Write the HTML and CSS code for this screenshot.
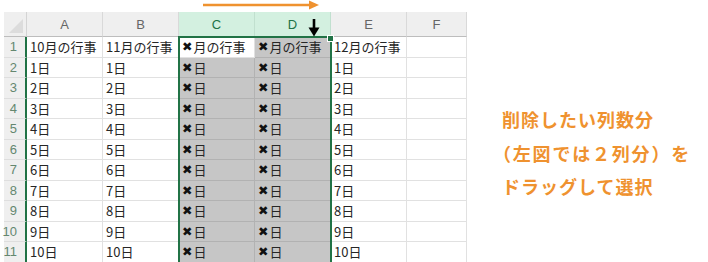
FILE: index.html
```html
<!DOCTYPE html>
<html>

<head>
    <meta charset="utf-8">
    <title>列の選択</title>
    <meta name="viewport" content="width=device-width, initial-scale=1">
    <link rel="stylesheet" href="styles.css">
</head>

<body>
    <main class="page">
        <section class="sheet">
            <div class="corner"><span class="corner-mark"></span></div>
            <div class="col-head">A</div>
            <div class="col-head">B</div>
            <div class="col-head active">C</div>
            <div class="col-head active">D</div>
            <div class="col-head">E</div>
            <div class="col-head">F</div>

            <div class="row-head">1</div>
            <div class="cell">10月の行事</div>
            <div class="cell">11月の行事</div>
            <div class="cell current"><b>✖</b>月の行事</div>
            <div class="cell sel"><b>✖</b>月の行事</div>
            <div class="cell">12月の行事</div>
            <div class="cell"></div>

            <div class="row-head">2</div>
            <div class="cell">1日</div>
            <div class="cell">1日</div>
            <div class="cell sel"><b>✖</b>日</div>
            <div class="cell sel"><b>✖</b>日</div>
            <div class="cell">1日</div>
            <div class="cell"></div>

            <div class="row-head">3</div>
            <div class="cell">2日</div>
            <div class="cell">2日</div>
            <div class="cell sel"><b>✖</b>日</div>
            <div class="cell sel"><b>✖</b>日</div>
            <div class="cell">2日</div>
            <div class="cell"></div>

            <div class="row-head">4</div>
            <div class="cell">3日</div>
            <div class="cell">3日</div>
            <div class="cell sel"><b>✖</b>日</div>
            <div class="cell sel"><b>✖</b>日</div>
            <div class="cell">3日</div>
            <div class="cell"></div>

            <div class="row-head">5</div>
            <div class="cell">4日</div>
            <div class="cell">4日</div>
            <div class="cell sel"><b>✖</b>日</div>
            <div class="cell sel"><b>✖</b>日</div>
            <div class="cell">4日</div>
            <div class="cell"></div>

            <div class="row-head">6</div>
            <div class="cell">5日</div>
            <div class="cell">5日</div>
            <div class="cell sel"><b>✖</b>日</div>
            <div class="cell sel"><b>✖</b>日</div>
            <div class="cell">5日</div>
            <div class="cell"></div>

            <div class="row-head">7</div>
            <div class="cell">6日</div>
            <div class="cell">6日</div>
            <div class="cell sel"><b>✖</b>日</div>
            <div class="cell sel"><b>✖</b>日</div>
            <div class="cell">6日</div>
            <div class="cell"></div>

            <div class="row-head">8</div>
            <div class="cell">7日</div>
            <div class="cell">7日</div>
            <div class="cell sel"><b>✖</b>日</div>
            <div class="cell sel"><b>✖</b>日</div>
            <div class="cell">7日</div>
            <div class="cell"></div>

            <div class="row-head">9</div>
            <div class="cell">8日</div>
            <div class="cell">8日</div>
            <div class="cell sel"><b>✖</b>日</div>
            <div class="cell sel"><b>✖</b>日</div>
            <div class="cell">8日</div>
            <div class="cell"></div>

            <div class="row-head">10</div>
            <div class="cell">9日</div>
            <div class="cell">9日</div>
            <div class="cell sel"><b>✖</b>日</div>
            <div class="cell sel"><b>✖</b>日</div>
            <div class="cell">9日</div>
            <div class="cell"></div>

            <div class="row-head">11</div>
            <div class="cell">10日</div>
            <div class="cell">10日</div>
            <div class="cell sel"><b>✖</b>日</div>
            <div class="cell sel"><b>✖</b>日</div>
            <div class="cell">10日</div>
            <div class="cell"></div>

            <!-- selection frame over C1:D11 -->
            <div class="selection"><span class="handle"></span></div>
        </section>

        <p class="note">
            <span class="line">削除したい列数分</span>
            <span class="line wide"><span class="paren">（</span>左図では２列分）を</span>
            <span class="line">ドラッグして選択</span>
        </p>

        <!-- drag arrows drawn over the sheet -->
        <svg class="drag-arrow" width="120" height="10" viewBox="0 0 120 10">
            <line x1="0" y1="5" x2="110" y2="5" stroke="#ef922f" stroke-width="2.4" />
            <path d="M106 0.5 L116 5 L106 9.5 Z" fill="#ef922f" />
        </svg>
        <svg class="down-arrow" width="12" height="18" viewBox="0 0 12 18">
            <line x1="6" y1="0" x2="6" y2="10" stroke="#000" stroke-width="2.6" />
            <path d="M0.5 8.5 L11.5 8.5 L6 17.5 Z" fill="#000" />
        </svg>
    </main>
</body>

</html>
```

FILE: styles.css
```css
body {
    margin: 0;
    background-color: #fff;
    font-family: "Noto Sans CJK JP", "Noto Sans", sans-serif;
}

.page {
    position: relative;
    display: flex;
    align-items: flex-start;
    width: 708px;
    height: 262px;
    overflow: hidden;
}

.sheet {
    position: relative;
    display: grid;
    grid-template-columns: 23px 76px 76px 76px 76px 76px 60px;
    grid-template-rows: 25px repeat(11, 20.5px);
    margin: 12px 0 0 4px;
    font-size: 13px;
    color: #262626;
}

.corner {
    position: relative;
    background-color: #efefef;
    border-bottom: 1px solid #bdbdbd;
    border-right: 1px solid #d4d4d4;
    box-sizing: border-box;
}

.corner-mark {
    position: absolute;
    right: 3px;
    bottom: 3px;
    width: 0;
    height: 0;
    border-left: 14px solid transparent;
    border-bottom: 14px solid #dcdcdc;
}

.col-head {
    display: flex;
    align-items: center;
    justify-content: center;
    background-color: #efefef;
    border-right: 1px solid #d9d9d9;
    border-bottom: 1px solid #bdbdbd;
    box-sizing: border-box;
    font-family: "Liberation Sans", sans-serif;
    font-size: 13px;
    color: #666;
}

.col-head.active {
    background-color: #d3f0e0;
    color: #217346;
    border-right-color: #c1e0cf;
}

.row-head {
    display: flex;
    align-items: center;
    justify-content: flex-end;
    padding-right: 8px;
    background-color: #efefef;
    border-right: 2px solid #217346;
    border-bottom: 1px solid #dedede;
    box-sizing: border-box;
    font-family: "Liberation Sans", sans-serif;
    font-size: 13px;
    color: #64876f;
}

.cell {
    display: flex;
    align-items: center;
    padding-left: 3px;
    border-right: 1px solid #e1e1e1;
    border-bottom: 1px solid #e1e1e1;
    box-sizing: border-box;
    white-space: nowrap;
    overflow: hidden;
}

.cell b {
    margin-right: 1px;
    font-family: "DejaVu Sans", sans-serif;
    font-size: 12.5px;
    font-weight: 400;
    color: #111;
}

.cell.sel {
    background-color: #c6c6c6;
    border-right-color: #b2b2b2;
    border-bottom-color: #b2b2b2;
}

.cell.current {
    background-color: #fff;
}

.selection {
    position: absolute;
    left: 174px;
    top: 24px;
    width: 154px;
    height: 228px;
    border: 2px solid #217346;
    border-bottom: none;
    box-sizing: border-box;
    pointer-events: none;
}

.handle {
    position: absolute;
    right: -4px;
    top: -3px;
    width: 5px;
    height: 5px;
    background-color: #217346;
    border: 1px solid #fff;
}

.note {
    display: flex;
    flex-direction: column;
    margin: 103px 0 0 35px;
    font-size: 18px;
    line-height: 33.5px;
    letter-spacing: 1px;
    font-weight: 700;
    color: #ef922f;
    white-space: nowrap;
}

.line.wide {
    letter-spacing: 1.8px;
}

.paren {
    margin-left: -9px;
}

.drag-arrow {
    position: absolute;
    left: 203px;
    top: 0;
}

.down-arrow {
    position: absolute;
    left: 308px;
    top: 19px;
}
```
